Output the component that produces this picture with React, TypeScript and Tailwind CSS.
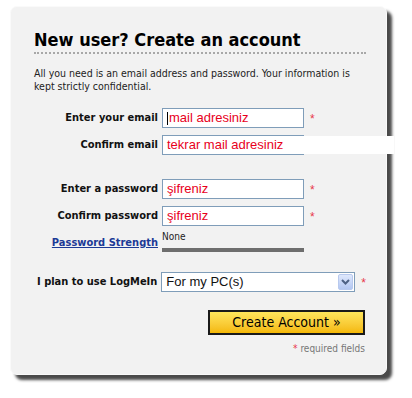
const labelFont = "font-['DejaVu_Sans_Condensed','DejaVu_Sans',sans-serif]";

const Star = () => <span className="ml-[6px] mt-[2px] text-[12px] leading-none text-[#e8374a] font-['Liberation_Sans',sans-serif]">*</span>;

const Field = ({ label, value, caret = false, star = true, cover = false }: { label: string; value: string; caret?: boolean; star?: boolean; cover?: boolean }) => (
  <div className="relative flex h-[20px] items-center">
    <label className={`w-[124px] text-right text-[11px] font-bold text-[#111] ${labelFont}`}>{label}</label>
    <div className="ml-[4px] flex h-[20px] w-[142px] items-center border border-[#7f9db9] bg-white pl-[4px] font-['Liberation_Sans',sans-serif] text-[13px] text-[#e8001c]">
      {caret && <span className="mr-[1px] h-[13px] w-px bg-black" />}
      {value}
    </div>
    {star && <Star />}
    {cover && <div className="absolute left-[269px] top-[1px] h-[18px] w-[91px] bg-white" />}
  </div>
);

export default function App() {
  return (
    <div className="h-[398px] w-[412px] bg-white pl-[10px] pt-[6px]">
      <div className="h-[369px] w-[377px] rounded-[7px] border border-[#fafafa] bg-[#f2f2f2] pl-[23px] pr-[20px] pt-[22px] shadow-[5px_5px_3px_#4a4a4a]">
        <h1 className="h-[25px] border-b-2 border-dotted border-[#a8a8a8] font-['DejaVu_Sans_Condensed','DejaVu_Sans',sans-serif] text-[18px] font-bold leading-[22px] text-black">
          New user? Create an account
        </h1>
        <p className={`mt-[13px] text-[10.5px] leading-[13px] text-[#222] ${labelFont}`}>
          All you need is an email address and password. Your information is kept strictly confidential.
        </p>
        <div className="mt-[15px]">
          <Field label="Enter your email" value="mail adresiniz" caret />
          <div className="mt-[7px]">
            <Field label="Confirm email" value="tekrar mail adresiniz" star={false} cover />
          </div>
          <div className="mt-[24px]">
            <Field label="Enter a password" value="şifreniz" />
          </div>
          <div className="mt-[7px]">
            <Field label="Confirm password" value="şifreniz" />
          </div>
          <div className="mt-[4px] flex h-[22px] items-end">
            <a href="#" className={`w-[124px] pb-[1px] text-right text-[11px] font-bold text-[#1c3a96] underline ${labelFont}`}>
              Password Strength
            </a>
            <div className="ml-[4px] flex w-[142px] flex-col">
              <span className={`text-[10px] leading-[11px] text-[#222] ${labelFont}`}>None</span>
              <div className="mt-[6px] h-[4px] w-full bg-[#6e6e6e]" />
            </div>
          </div>
          <div className="mt-[20px] flex h-[20px] items-center">
            <label className={`w-[124px] text-right text-[11px] font-bold text-[#111] ${labelFont}`}>I plan to use LogMeIn</label>
            <div className="ml-[4px] flex h-[20px] w-[195px] items-center justify-between border border-[#7f9db9] bg-white pl-[4px] pr-px font-['Liberation_Sans',sans-serif] text-[13px] text-[#111]">
              <span>For my PC(s)</span>
              <span className="flex h-[16px] w-[15px] items-center justify-center rounded-[2px] border border-[#b8c9ee] bg-gradient-to-b from-[#dfe8fc] to-[#b3c7f2]">
                <svg width="9" height="6" viewBox="0 0 9 6">
                  <path d="M1 1 L4.5 4.5 L8 1" fill="none" stroke="#4d6185" strokeWidth="2" />
                </svg>
              </span>
            </div>
            <Star />
          </div>
          <div className="mt-[18px] flex justify-end pr-[1px]">
            <button className={`h-[25px] w-[157px] border-2 border-[#1a1a1a] bg-gradient-to-b from-[#ffe65a] to-[#f4b800] text-[14px] text-black ${labelFont}`}>
              Create Account »
            </button>
          </div>
          <div className={`mt-[6px] flex justify-end pr-[1px] text-[10px] text-[#777] ${labelFont}`}>
            <span className="mr-[3px] text-[#e8374a]">*</span>required fields
          </div>
        </div>
      </div>
    </div>
  );
}
